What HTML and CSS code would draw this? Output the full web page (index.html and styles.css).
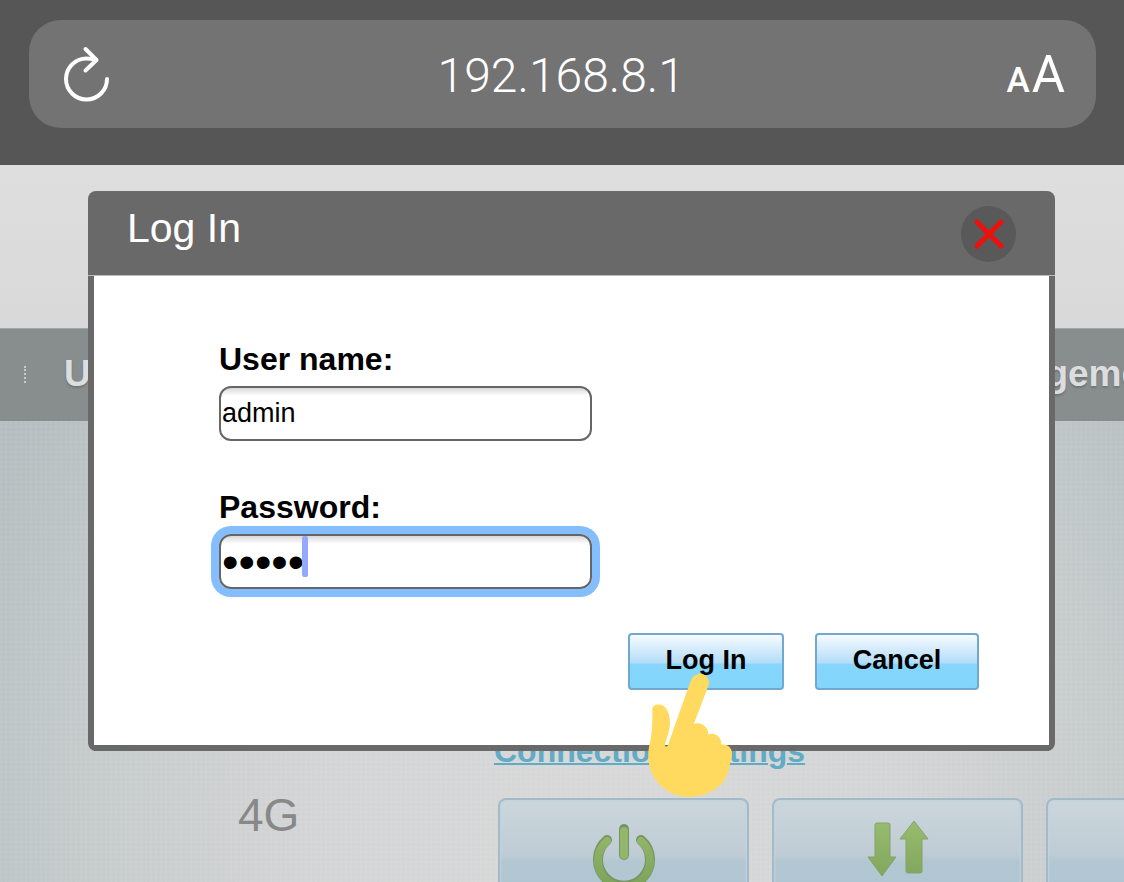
FILE: index.html
```html
<!DOCTYPE html>
<html lang="en">
<head>
  <meta charset="UTF-8" />
  <meta name="viewport" content="width=device-width, initial-scale=1.0" />
  <title>192.168.8.1</title>
  <link rel="stylesheet" href="styles.css">
</head>
<body>
  <!-- Browser bar -->
  <header class="browser">
    <div class="address-bar">
      <button type="button" class="bar-button" aria-label="Reload">
        <svg width="50" height="58" viewBox="62 45 50 58" fill="none" stroke="#fff" stroke-width="4" stroke-linecap="round" stroke-linejoin="round">
          <path d="M107 79A20.5 20.5 0 1 1 86.5 58.500Q91 58.500 96 60" />
          <path d="M85.5 49L96.5 60L85.5 70.5" />
        </svg>
      </button>
      <span class="address">192.168.8.1</span>
      <button type="button" class="bar-button text-size" aria-label="Text size"><span class="small-a">A</span><span class="big-a">A</span></button>
    </div>
  </header>

  <main class="page">
    <div class="page-top"></div>
    <nav class="menu">
      <span class="menu-divider"></span>
      <a href="#">U</a>
      <a href="#" class="menu-last">Management</a>
    </nav>
    <section class="status">
      <div class="network">4G</div>
      <div class="connection">
        <a href="#" class="settings-link">Connection Settings</a>
        <div class="tiles">
          <button type="button" class="tile" aria-label="Power">
            <svg width="66" height="68" viewBox="0 0 66 68" fill="none" stroke-linecap="round">
              <defs>
                <linearGradient id="green" x1="0" y1="0" x2="0" y2="68" gradientUnits="userSpaceOnUse">
                  <stop offset="0" stop-color="#98bc6f" />
                  <stop offset="1" stop-color="#7ba259" />
                </linearGradient>
              </defs>
              <path d="M16 19A26 26 0 1 0 50 19" stroke="#789363" stroke-width="10" />
              <path d="M16 20A26 26 0 1 0 50 20" stroke="url(#green)" stroke-width="8" />
              <path d="M33 8V34" stroke="#789363" stroke-width="10" />
              <path d="M33 10V34" stroke="#92b76c" stroke-width="8" />
            </svg>
          </button>
          <button type="button" class="tile" aria-label="Traffic">
            <svg width="66" height="68" viewBox="0 0 66 68" fill="url(#green)" stroke="#84a368" stroke-width="1" stroke-linejoin="round">
              <path d="M10 4Q10 2 12 2H23Q25 2 25 4V36H31L17 55L3 36H10Z" />
              <path d="M49 0L63 18H57V50Q57 52 55 52H43Q41 52 41 50V18H35Z" />
            </svg>
          </button>
          <button type="button" class="tile" aria-label="More"></button>
        </div>
      </div>
    </section>

    <!-- Login dialog -->
    <div class="modal" role="dialog" aria-labelledby="modalTitle">
      <div class="modal-header">
        <h1 id="modalTitle">Log In</h1>
        <button type="button" class="close" aria-label="Close">
          <svg width="32" height="32" viewBox="0 0 32 32" stroke="#ee100c" stroke-width="5" stroke-linecap="round">
            <path d="M4 4L28 28M28 4L4 28" />
          </svg>
        </button>
      </div>
      <form class="modal-content">
        <label for="username">User name:</label>
        <input type="text" id="username" value="admin">
        <label for="password">Password:</label>
        <div class="password-field">
          <input type="password" id="password" class="focused" value="admin">
          <span class="caret"></span>
        </div>
        <div class="actions">
          <div class="login-action">
            <button type="button" class="action">Log In</button>
            <svg class="hand" width="85" height="125" viewBox="145 190 256 374" fill="#ffda5e">
              <path d="M158 302C157 289 166 284 176 284C199 284 212 308 211 342C210 366 200 386 196 405C195 411 203 412 205 406L270 222C277 202 286 191 302 191C320 192 332 208 328 224L283 342C303 335 326 348 327 374C343 366 367 378 366 404C385 403 397 412 398 430C399 447 393 454 390 472C382 525 332 562 266 562C210 562 164 521 151 475C143 445 145 423 151 398C157 370 159 340 158 302Z" />
            </svg>
          </div>
          <button type="button" class="action cancel">Cancel</button>
        </div>
      </form>
    </div>
  </main>
</body>
</html>
```
FILE: styles.css
```css
* {
  box-sizing: border-box;
}
body {
  margin: 0;
  height: 100vh;
  display: flex;
  flex-direction: column;
  overflow: hidden;
  font-family: "Liberation Sans", Arial, sans-serif;
}
button {
  font-family: inherit;
  padding: 0;
  border: none;
  background: none;
  cursor: pointer;
}
svg {
  display: block;
}
/* Browser bar */
.browser {
  padding: 20px 28px 37px 29px;
  background-color: #565656;
}
.address-bar {
  display: flex;
  align-items: center;
  justify-content: space-between;
  height: 108px;
  padding: 0 31px 0 33px;
  border-radius: 32px;
  background-color: #737373;
  color: #fff;
}
.bar-button {
  color: #fff;
}
.address {
  padding: 2px 0 0 4px;
  font-family: Roboto, sans-serif;
  font-size: 48px;
  font-weight: 300;
}
.text-size {
  display: flex;
  align-items: baseline;
  gap: 2px;
  padding-top: 8px;
  font-family: Roboto, sans-serif;
  line-height: 60px;
}
.small-a {
  font-size: 35px;
  font-weight: 500;
}
.big-a {
  font-size: 51px;
}
/* Router page */
.page {
  position: relative;
  flex: 1;
  display: flex;
  flex-direction: column;
  min-height: 0;
}
.page-top {
  height: 163px;
  flex: none;
  background: linear-gradient(#dedede, #d9d9d9);
}
.menu {
  display: flex;
  align-items: center;
  flex: none;
  height: 93px;
  padding: 0 0 2px 24px;
  overflow: hidden;
  background-color: #888d8e;
  border-top: 1px solid #a4a7a8;
}
.menu a {
  color: #dcddde;
  font-size: 37px;
  font-weight: bold;
  text-decoration: none;
  text-shadow: 0 2px 2px #707576;
}
.menu-divider {
  height: 17px;
  margin-right: 38px;
  border-left: 2px dotted #c9cccc;
}
.menu .menu-last {
  margin-left: auto;
  margin-right: -53px;
}
.status {
  flex: 1;
  display: grid;
  grid-template-columns: 494px 1fr;
  min-height: 0;
  padding-top: 312px;
  overflow: hidden;
  background:
    repeating-linear-gradient(90deg, rgba(255, 255, 255, 0.04) 0 2px, transparent 2px 5px),
    repeating-linear-gradient(rgba(255, 255, 255, 0.04) 0 2px, transparent 2px 5px),
    radial-gradient(circle at 54% 92%, #d8d8d9 0, #d3d4d5 300px, #c4caca 540px, #b4bdc0 720px);
}
.network {
  padding: 55px 0 0 238px;
  color: #888889;
  font-size: 46px;
}
.settings-link {
  color: #62abc4;
  font-size: 32px;
  font-weight: bold;
  line-height: 36px;
  text-decoration-thickness: 2px;
}
.tiles {
  display: flex;
  gap: 23px;
  margin: 29px 0 0 4px;
}
.tile {
  display: flex;
  justify-content: center;
  flex: none;
  width: 251px;
  height: 120px;
  padding-top: 21px;
  border: 2px solid #a3bac9;
  border-radius: 8px;
  background: linear-gradient(#cbd6dc, #c0ccd5 54px, #b2c7d2 62px, #adc5d2);
  box-shadow: inset 0 0 2px 1px #c4d3dc;
}
/* Login dialog */
.modal {
  position: absolute;
  top: 26px;
  left: 88px;
  right: 69px;
  border-radius: 8px;
  background-color: #696969;
}
.modal-header {
  display: flex;
  justify-content: space-between;
  align-items: flex-start;
  height: 85px;
  padding: 15px 39px 0 39px;
  border-bottom: 1px solid #bbb;
}
.modal-header h1 {
  margin: 0;
  color: #fff;
  font-size: 41px;
  font-weight: normal;
  line-height: 44px;
}
.close {
  display: flex;
  align-items: center;
  justify-content: center;
  width: 55px;
  height: 56px;
  border-radius: 50%;
  background-color: #595959;
}
.modal-content {
  display: flex;
  flex-direction: column;
  margin: 0 6px;
  padding: 65px 70px 55px 125px;
  border-bottom: 6px solid #696969;
  background-color: #fff;
}
.modal-content label {
  margin-bottom: 9px;
  font-size: 32px;
  font-weight: bold;
  line-height: 36px;
}
.modal-content input {
  display: block;
  width: 373px;
  height: 55px;
  padding: 0 1px;
  border: 2px solid #666;
  border-radius: 12px;
  outline: none;
  background: linear-gradient(#d9d9d9, #fff 8px);
  color: #000;
  font-family: inherit;
  font-size: 27px;
}
#username {
  margin-bottom: 48px;
}
.password-field {
  position: relative;
  margin-bottom: 44px;
}
.modal-content .focused {
  font-size: 47px;
  box-shadow: 0 0 0 8px #84beff;
}
.caret {
  position: absolute;
  top: 2px;
  left: 83px;
  width: 6px;
  height: 41px;
  border-radius: 2px;
  background-color: #96a8fa;
}
.actions {
  display: flex;
  justify-content: flex-end;
  gap: 31px;
}
.login-action {
  position: relative;
}
.action {
  display: block;
  width: 156px;
  height: 57px;
  padding-bottom: 2px;
  border: 2px solid #70a8d0;
  border-radius: 4px;
  background: linear-gradient(#f7fbff, #b4ddf9 52%, #85d6fc 56%, #83d5fc);
  color: #000;
  font-size: 27px;
  font-weight: bold;
}
.cancel {
  width: 164px;
}
/* Pointing hand over the login button */
.hand {
  position: absolute;
  top: 40px;
  left: 20px;
  pointer-events: none;
}
```
